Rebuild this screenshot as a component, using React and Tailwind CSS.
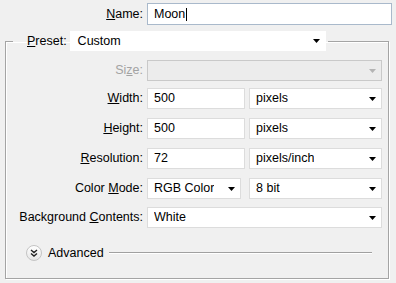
import React from "react";

const font = { fontFamily: "'Liberation Sans', Arial, sans-serif" };

// small black triangle used by every dropdown
const Arrow = ({ disabled }) => (
  <svg width="7" height="4" viewBox="0 0 7 4" className="shrink-0">
    <path d="M0 0h7L3.5 4z" fill={disabled ? "#b4b4b4" : "#000"} />
  </svg>
);

const Select = ({ value, className = "", disabled }) => (
  <div
    className={`flex h-[21px] items-center justify-between border pl-[6px] pr-[5px] ${
      disabled
        ? "border-[#c9c9c9] bg-[#ececec]"
        : "border-[#dcdcdc] bg-white"
    } ${className}`}
  >
    <span className="truncate">{value}</span>
    <Arrow disabled={disabled} />
  </div>
);

const Field = ({ value, className = "" }) => (
  <div
    className={`flex h-[21px] items-center border border-[#dcdcdc] bg-white pl-[6px] ${className}`}
  >
    {value}
  </div>
);

// label with an underlined access key
const Label = ({ pre = "", k, post = "", disabled }) => (
  <span className={disabled ? "text-[#a3a3a3]" : "text-black"}>
    {pre}
    <span className="underline underline-offset-1">{k}</span>
    {post}
  </span>
);

const Row = ({ label, children, className = "" }) => (
  <div className={`flex items-center ${className}`}>
    <div className="w-[137px] shrink-0 text-right">{label}</div>
    <div className="ml-[4px] flex flex-1 gap-[4px]">{children}</div>
  </div>
);

export default function App() {
  return (
    <div
      className="h-[283px] w-[396px] overflow-hidden bg-[#f0f0f0] text-[12.5px] text-black"
      style={font}
    >
      {/* Name */}
      <div className="flex items-center pt-[3px]">
        <div className="w-[143px] shrink-0 text-right">
          <Label k="N" post="ame:" />
        </div>
        <div className="ml-[4px] flex h-[22px] w-[245px] items-center border border-[#a9b9cb] bg-white pl-[6px]">
          Moon<span className="ml-[1px] h-[13px] w-px bg-black" />
        </div>
      </div>

      <fieldset className="ml-[5px] mt-[6px] h-[248px] w-[384px] border border-[#a4a4a4] pb-0 pr-[6px] shadow-[1px_1px_0_#fff,inset_1px_1px_0_#fff]">
        <legend className="ml-[7px] flex items-center gap-[3px] pl-[14px] pr-[2px]">
          <Label k="P" post="reset:" />
          <div className="flex h-[20px] w-[256px] items-center justify-between bg-white pl-[8px] pr-[6px]">
            <span>Custom</span>
            <Arrow />
          </div>
        </legend>

        <Row className="mt-[9px]" label={<Label pre="Si" k="z" post="e:" disabled />}>
          <Select value="" disabled className="flex-1" />
        </Row>

        <Row className="mt-[7px]" label={<Label k="W" post="idth:" />}>
          <Field value="500" className="w-[98px]" />
          <Select value="pixels" className="flex-1" />
        </Row>

        <Row className="mt-[9px]" label={<Label k="H" post="eight:" />}>
          <Field value="500" className="w-[98px]" />
          <Select value="pixels" className="flex-1" />
        </Row>

        <Row className="mt-[9px]" label={<Label k="R" post="esolution:" />}>
          <Field value="72" className="w-[98px]" />
          <Select value="pixels/inch" className="flex-1" />
        </Row>

        <Row className="mt-[9px]" label={<Label pre="Color " k="M" post="ode:" />}>
          <Select value="RGB Color" className="w-[94px]" />
          <Select value="8 bit" className="ml-[4px] flex-1" />
        </Row>

        <Row className="mt-[8px]" label={<Label pre="Background " k="C" post="ontents:" />}>
          <Select value="White" className="flex-1" />
        </Row>

        {/* Advanced */}
        <div className="mt-[16px] flex items-center pl-[20px]">
          <div className="flex h-[16px] w-[16px] items-center justify-center rounded-full border border-[#c4c4c4] bg-gradient-to-b from-white to-[#e6e6e6]">
            <svg width="8" height="8" viewBox="0 0 8 8">
              <path
                d="M1 1l3 2.5L7 1M1 4.5l3 2.5 3-2.5"
                fill="none"
                stroke="#222"
                strokeWidth="1.4"
              />
            </svg>
          </div>
          <span className="ml-[6px]">Advanced</span>
          <div className="ml-[5px] mr-[10px] h-[2px] flex-1 border-t border-[#a0a0a0] border-b-white bg-white" />
        </div>
      </fieldset>
    </div>
  );
}
